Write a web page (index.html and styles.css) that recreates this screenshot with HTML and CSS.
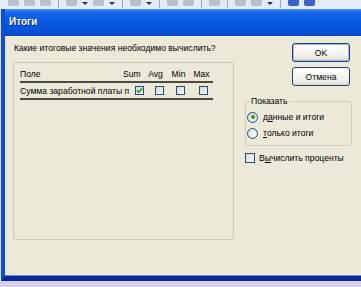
FILE: index.html
```html
<!DOCTYPE html>
<html>
<head>
	<title>Итоги</title>
	<link rel="stylesheet" href="styles.css">
</head>
<body>

	<!-- Excel toolbar behind the dialog -->
	<div class="toolbar">
		<span class="tb-icon"></span>
		<span class="tb-icon"></span>
		<span class="tb-icon"></span>
		<span class="tb-sep"></span>
		<span class="tb-icon"></span>
		<span class="tb-drop"></span>
		<span class="tb-icon"></span>
		<span class="tb-drop"></span>
		<span class="tb-sep"></span>
		<span class="tb-icon"></span>
		<span class="tb-drop"></span>
		<span class="tb-sep"></span>
		<span class="tb-icon"></span>
		<span class="tb-icon"></span>
		<span class="tb-sep"></span>
		<span class="tb-icon"></span>
		<span class="tb-sep"></span>
		<span class="tb-icon"></span>
		<span class="tb-icon"></span>
		<span class="tb-drop"></span>
		<span class="tb-sep"></span>
		<span class="tb-icon blue"></span>
		<span class="tb-icon blue"></span>
	</div>

	<div class="window">
		<div class="titlebar">Итоги</div>

		<div class="dlg">
			<div class="main">
				<p class="prompt">Какие итоговые значения необходимо вычислить?</p>

				<div class="list">
					<div class="grid head">
						<span class="name">Поле</span>
						<span class="col sum">Sum</span>
						<span class="col">Avg</span>
						<span class="col">Min</span>
						<span class="col">Max</span>
					</div>
					<div class="grid row">
						<span class="name">Сумма заработной платы п</span>
						<span class="box checked b-sum">
							<svg viewBox="0 0 9 9" width="9" height="9"><path d="M2 4.2 L3.8 6.2 L7.2 2.4" fill="none" stroke="#21a121" stroke-width="1.6"/></svg>
						</span>
						<span class="box b-avg"></span>
						<span class="box b-min"></span>
						<span class="box b-max"></span>
					</div>
				</div>
			</div>

			<div class="side">
				<button class="btn default">OK</button>
				<button class="btn">Отмена</button>

				<fieldset class="group">
					<legend>Показать</legend>
					<div class="opt"><span class="radio on"></span>д<u>а</u>нные и итоги</div>
					<div class="opt"><span class="radio"></span><u>т</u>олько итоги</div>
				</fieldset>

				<div class="opt check"><span class="box"></span>В<u>ы</u>числить проценты</div>
			</div>
		</div>
	</div>

	<div class="below"></div>

</body>
</html>
```

FILE: styles.css
```css
body {
	margin: 0;
	width: 361px;
	height: 287px;
	overflow: hidden;
	background: #dcdcec;
	font-family: "Liberation Sans", Arial, sans-serif;
	font-size: 8.6px;
	color: #000;
}

.toolbar {
	height: 9px;
	display: flex;
	align-items: flex-start;
	gap: 5px;
	padding-left: 8px;
	background: #e4ebf7;
	overflow: hidden;
}

.tb-icon {
	flex-shrink: 0;
	width: 11px;
	height: 6px;
	background: #b9bfcc;
	border-radius: 0 0 2px 2px;
}

.tb-icon.blue {
	background: #3b62c8;
}

.tb-drop {
	flex-shrink: 0;
	width: 0;
	height: 0;
	margin-top: 2px;
	border: 3px solid transparent;
	border-top-color: #333;
}

.tb-sep {
	flex-shrink: 0;
	width: 1px;
	height: 8px;
	background: #9aa6c4;
	margin: 0 2px;
}

.window {
	width: 380px;
	margin-left: 1px;
	border-left: 4px solid #0c4fd6;
	border-bottom: 5px solid #0a2a98;
	box-shadow: inset 1px 0 #5d8ff0;
}

.titlebar {
	height: 27px;
	padding-left: 4px;
	line-height: 26px;
	color: #fff;
	font-weight: bold;
	font-size: 10px;
	text-shadow: 1px 1px #0a2a80;
	background: linear-gradient(#4f96f5 0, #1767ea 12%, #0a5be4 45%, #0552dc 75%, #0846c4 100%);
}

.dlg {
	height: 240px;
	display: flex;
	background: #ece9d8;
	box-sizing: border-box;
	padding-top: 6px;
	border-bottom: 1px solid #6f8de0;
}

.main {
	width: 229px;
	box-sizing: border-box;
	flex-shrink: 0;
	padding-left: 8px;
}

.prompt {
	margin: 0 0 7px 1px;
	line-height: 13px;
	white-space: nowrap;
}

.list {
	width: 221px;
	height: 178px;
	box-sizing: border-box;
	border: 1px solid #cdcab8;
	border-radius: 2px;
	padding: 4px 20px 0 6px;
}

.grid {
	display: grid;
	grid-template-columns: minmax(0, 1fr) repeat(4, 23px);
	align-items: center;
	border-bottom: 2px solid #4b4a42;
}

.head {
	height: 14px;
}

.row {
	height: 15px;
}

.name {
	white-space: nowrap;
}

.col {
	justify-self: center;
}

.col.sum {
	justify-self: start;
	padding-left: 2px;
}

.box {
	flex-shrink: 0;
	width: 9px;
	height: 9px;
	box-sizing: border-box;
	border: 1px solid #1c5180;
	background: linear-gradient(135deg, #d6d5cc, #fafaf8);
	display: inline-block;
	justify-self: end;
}

.box svg {
	display: block;
	margin: -1px;
}

.b-avg {
	margin-right: 3px;
}

.b-min,
.b-max {
	margin-right: 5px;
}

.side {
	width: 107px;
	flex-shrink: 0;
	margin-left: 11px;
	padding-top: 1px;
	display: flex;
	flex-direction: column;
}

.btn {
	align-self: flex-end;
	margin-right: 2px;
	width: 58px;
	height: 19px;
	padding: 0;
	border: 1px solid #1f3f73;
	border-radius: 3px;
	background: linear-gradient(#ffffff, #f2f1ec 70%, #dcd8cc);
	font-family: inherit;
	font-size: 8.6px;
	color: #000;
}

.btn + .btn {
	margin-top: 5px;
}

.btn.default {
	box-shadow: inset 0 0 0 1px #9cbcf0;
}

.group {
	margin: 9px 0 0;
	padding: 2px 0 3px 1px;
	border: 1px solid #d0cdbb;
	border-radius: 3px;
	height: 51px;
	box-sizing: border-box;
}

.group legend {
	padding: 0 1px;
	margin-left: 3px;
	line-height: 12px;
	color: #000;
}

.opt {
	height: 16px;
	display: flex;
	align-items: center;
	white-space: nowrap;
}

.radio {
	flex-shrink: 0;
	width: 11px;
	height: 11px;
	box-sizing: border-box;
	border: 1px solid #1c5180;
	border-radius: 50%;
	background: radial-gradient(circle at 65% 65%, #fbfbf8, #d6d5cc);
	margin-right: 5px;
	display: flex;
	align-items: center;
	justify-content: center;
}

.radio.on::after {
	content: "";
	width: 4px;
	height: 4px;
	border-radius: 50%;
	background: #21a121;
}

.check {
	margin-top: 5px;
	height: 14px;
}

.check .box {
	width: 10px;
	height: 10px;
	margin-right: 4px;
}

.below {
	height: 10px;
	background: #d6d2ee;
}
```
